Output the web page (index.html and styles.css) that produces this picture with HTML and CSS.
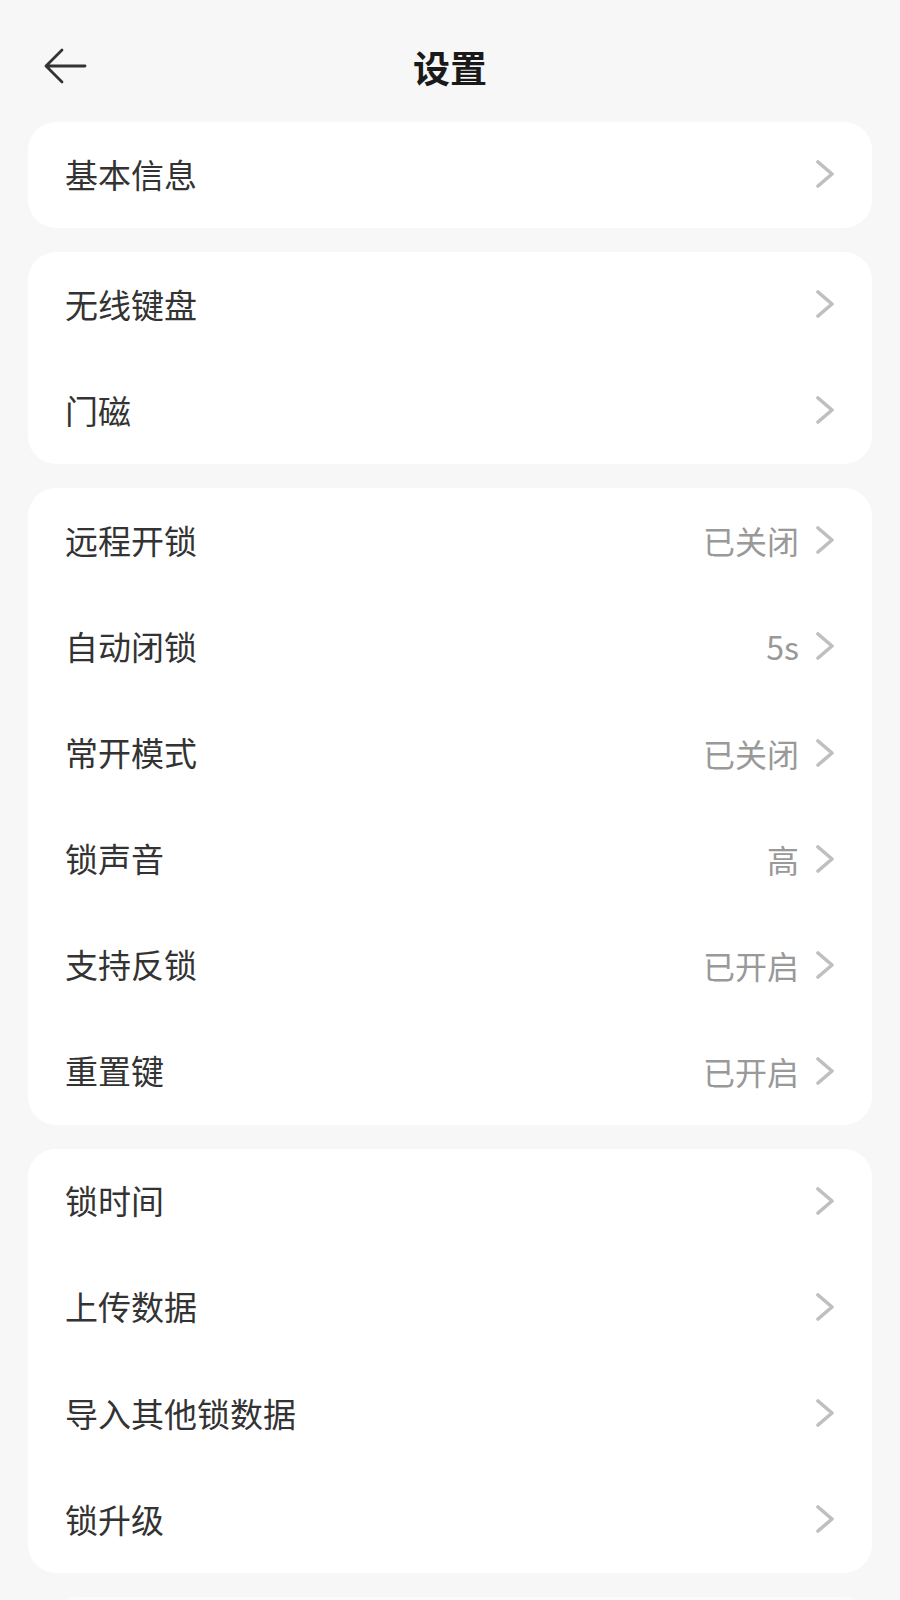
FILE: index.html
```html
<!DOCTYPE html>
<html lang="zh-CN">
<head>
<meta charset="utf-8">
<title>设置</title>
<link rel="stylesheet" href="styles.css">
</head>
<body>
<div class="page">
  <header class="topbar">
    <span class="back">
      <svg width="44" height="36" viewBox="0 0 44 36"><path d="M42 18H3M19 2L3 18L19 34" fill="none" stroke="#333" stroke-width="2.8" stroke-linecap="round" stroke-linejoin="round"/></svg>
    </span>
    <h1 class="title">设置</h1>
  </header>

  <section class="card">
    <div class="row"><span class="label">基本信息</span><span class="right"><svg class="chev" width="20" height="28" viewBox="0 0 20 28"><path d="M3 2L17 14L3 26" fill="none" stroke="#bfbfbf" stroke-width="3.6" stroke-linecap="round" stroke-linejoin="round"/></svg></span></div>
  </section>

  <section class="card">
    <div class="row"><span class="label">无线键盘</span><span class="right"><svg class="chev" width="20" height="28" viewBox="0 0 20 28"><path d="M3 2L17 14L3 26" fill="none" stroke="#bfbfbf" stroke-width="3.6" stroke-linecap="round" stroke-linejoin="round"/></svg></span></div>
    <div class="row"><span class="label">门磁</span><span class="right"><svg class="chev" width="20" height="28" viewBox="0 0 20 28"><path d="M3 2L17 14L3 26" fill="none" stroke="#bfbfbf" stroke-width="3.6" stroke-linecap="round" stroke-linejoin="round"/></svg></span></div>
  </section>

  <section class="card">
    <div class="row"><span class="label">远程开锁</span><span class="right"><span class="value">已关闭</span><svg class="chev" width="20" height="28" viewBox="0 0 20 28"><path d="M3 2L17 14L3 26" fill="none" stroke="#bfbfbf" stroke-width="3.6" stroke-linecap="round" stroke-linejoin="round"/></svg></span></div>
    <div class="row"><span class="label">自动闭锁</span><span class="right"><span class="value">5s</span><svg class="chev" width="20" height="28" viewBox="0 0 20 28"><path d="M3 2L17 14L3 26" fill="none" stroke="#bfbfbf" stroke-width="3.6" stroke-linecap="round" stroke-linejoin="round"/></svg></span></div>
    <div class="row"><span class="label">常开模式</span><span class="right"><span class="value">已关闭</span><svg class="chev" width="20" height="28" viewBox="0 0 20 28"><path d="M3 2L17 14L3 26" fill="none" stroke="#bfbfbf" stroke-width="3.6" stroke-linecap="round" stroke-linejoin="round"/></svg></span></div>
    <div class="row"><span class="label">锁声音</span><span class="right"><span class="value">高</span><svg class="chev" width="20" height="28" viewBox="0 0 20 28"><path d="M3 2L17 14L3 26" fill="none" stroke="#bfbfbf" stroke-width="3.6" stroke-linecap="round" stroke-linejoin="round"/></svg></span></div>
    <div class="row"><span class="label">支持反锁</span><span class="right"><span class="value">已开启</span><svg class="chev" width="20" height="28" viewBox="0 0 20 28"><path d="M3 2L17 14L3 26" fill="none" stroke="#bfbfbf" stroke-width="3.6" stroke-linecap="round" stroke-linejoin="round"/></svg></span></div>
    <div class="row"><span class="label">重置键</span><span class="right"><span class="value">已开启</span><svg class="chev" width="20" height="28" viewBox="0 0 20 28"><path d="M3 2L17 14L3 26" fill="none" stroke="#bfbfbf" stroke-width="3.6" stroke-linecap="round" stroke-linejoin="round"/></svg></span></div>
  </section>

  <section class="card">
    <div class="row"><span class="label">锁时间</span><span class="right"><svg class="chev" width="20" height="28" viewBox="0 0 20 28"><path d="M3 2L17 14L3 26" fill="none" stroke="#bfbfbf" stroke-width="3.6" stroke-linecap="round" stroke-linejoin="round"/></svg></span></div>
    <div class="row"><span class="label">上传数据</span><span class="right"><svg class="chev" width="20" height="28" viewBox="0 0 20 28"><path d="M3 2L17 14L3 26" fill="none" stroke="#bfbfbf" stroke-width="3.6" stroke-linecap="round" stroke-linejoin="round"/></svg></span></div>
    <div class="row"><span class="label">导入其他锁数据</span><span class="right"><svg class="chev" width="20" height="28" viewBox="0 0 20 28"><path d="M3 2L17 14L3 26" fill="none" stroke="#bfbfbf" stroke-width="3.6" stroke-linecap="round" stroke-linejoin="round"/></svg></span></div>
    <div class="row"><span class="label">锁升级</span><span class="right"><svg class="chev" width="20" height="28" viewBox="0 0 20 28"><path d="M3 2L17 14L3 26" fill="none" stroke="#bfbfbf" stroke-width="3.6" stroke-linecap="round" stroke-linejoin="round"/></svg></span></div>
  </section>

  <section class="card card-tail"></section>
</div>
</body>
</html>
```

FILE: styles.css
```css
html, body {
  margin: 0;
  padding: 0;
  background: #f7f7f7;
}
body {
  font-family: "Noto Sans CJK SC", "Noto Sans", sans-serif;
  color: #333;
  overflow: hidden;
}
.page {
  width: 900px;
  height: 1600px;
  overflow: hidden;
  display: flex;
  flex-direction: column;
  padding: 0 28px;
  box-sizing: border-box;
}
.topbar {
  height: 90px;
  padding-top: 22px;
  margin-bottom: 10px;
  display: flex;
  align-items: center;
  justify-content: center;
  position: relative;
  flex-shrink: 0;
}
.back {
  position: absolute;
  left: 15px;
  top: 48px;
  width: 44px;
  height: 36px;
  display: block;
}
.back svg { display: block; }
.title {
  margin: 0;
  font-size: 37px;
  font-weight: 700;
  color: #1a1a1a;
  line-height: 1;
}
.card {
  background: #fff;
  border-radius: 28px;
  margin-bottom: 24px;
  flex-shrink: 0;
}
.card-tail {
  height: 60px;
  margin-left: 22px;
  margin-right: 0;
  background: #fbfbfb;
}
.row {
  height: 106.1px;
  display: flex;
  align-items: center;
  justify-content: space-between;
  padding: 0 37px 2px 37px;
  box-sizing: border-box;
}
.label {
  font-size: 33px;
  color: #333;
  line-height: 1;
}
.right {
  display: flex;
  align-items: center;
  gap: 16px;
}
.value {
  font-size: 32px;
  color: #999;
  line-height: 1;
}
.chev { display: block; }
```
